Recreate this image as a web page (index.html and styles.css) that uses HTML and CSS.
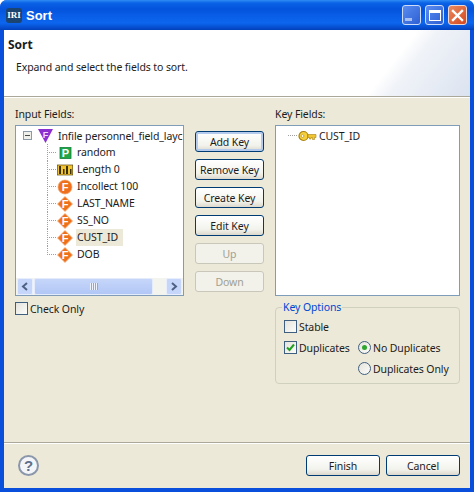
FILE: index.html
```html
<!DOCTYPE html>
<html lang="en">
<head>
    <meta charset="UTF-8">
    <meta name="viewport" content="width=device-width, initial-scale=1.0">
    <title>Sort</title>
    <link rel="stylesheet" href="styles.css">
</head>
<body>
    <svg class="icon-defs">
        <symbol id="icon-diamond" viewBox="0 0 16 16">
            <path d="M8 .5 15.500 8 8 15.500 .5 8z" fill="#ee6f1c" stroke="#f6b07c" stroke-width=".8"/>
            <text x="8" y="12" class="icon-letter">F</text>
        </symbol>
        <symbol id="icon-circle" viewBox="0 0 16 16">
            <circle cx="8" cy="8" r="7" fill="#ee701e" stroke="#f2a468" stroke-width=".7"/>
            <text x="8" y="12" class="icon-letter">F</text>
        </symbol>
    </svg>

    <div class="window">
        <header class="titlebar">
            <div class="app-logo">IRI</div>
            <div class="title-text">Sort</div>
            <div class="win-buttons">
                <div class="win-btn"><span class="min-glyph"></span></div>
                <div class="win-btn"><span class="max-glyph"></span></div>
                <div class="win-btn close">
                    <svg width="13" height="13" viewBox="0 0 13 13"><path d="M2 2l9 9M11 2l-9 9" stroke="#fff" stroke-width="2.4" stroke-linecap="square"/></svg>
                </div>
            </div>
        </header>

        <div class="dialog">
            <section class="banner">
                <h1>Sort</h1>
                <p>Expand and select the fields to sort.</p>
            </section>

            <main class="panels">
                <div class="column">
                    <div class="field-label">Input Fields:</div>
                    <div class="list-box tree-box">
                        <div class="tree">
                            <div class="tree-root">
                                <span class="expander"></span>
                                <svg class="root-icon" width="15" height="15" viewBox="0 0 15 15">
                                    <path d="M0 1h15L7.500 15z" fill="#8b2fd0"/>
                                    <text x="7.500" y="9.500" class="icon-letter small">F</text>
                                </svg>
                                <span class="root-text">Infile personnel_field_layc</span>
                            </div>
                            <div class="tree-row">
                                <span class="branch"></span>
                                <svg class="node-icon" width="16" height="16" viewBox="0 0 16 16">
                                    <rect x="3" y="2.500" width="11" height="11" fill="#1fa64a" stroke="#128038" stroke-width=".8"/>
                                    <text x="8.500" y="12" class="icon-letter">P</text>
                                </svg>
                                <span class="node-text">random</span>
                            </div>
                            <div class="tree-row">
                                <span class="branch"></span>
                                <svg class="node-icon" width="16" height="16" viewBox="0 0 16 16">
                                    <rect x=".3" y="3" width="15.400" height="10" fill="#f3c431" stroke="#5c480c" stroke-width=".7"/>
                                    <path d="M2 4h2v8H2zM6 7h1.500v5H6zM9 4h2v8H9zM13 7h1.500v5H13z" fill="#3c3008"/>
                                </svg>
                                <span class="node-text">Length 0</span>
                            </div>
                            <div class="tree-row">
                                <span class="branch"></span>
                                <svg class="node-icon" width="16" height="16"><use href="#icon-circle"/></svg>
                                <span class="node-text">Incollect 100</span>
                            </div>
                            <div class="tree-row">
                                <span class="branch"></span>
                                <svg class="node-icon" width="16" height="16"><use href="#icon-diamond"/></svg>
                                <span class="node-text">LAST_NAME</span>
                            </div>
                            <div class="tree-row">
                                <span class="branch"></span>
                                <svg class="node-icon" width="16" height="16"><use href="#icon-diamond"/></svg>
                                <span class="node-text">SS_NO</span>
                            </div>
                            <div class="tree-row">
                                <span class="branch"></span>
                                <svg class="node-icon" width="16" height="16"><use href="#icon-diamond"/></svg>
                                <span class="node-text selected">CUST_ID</span>
                            </div>
                            <div class="tree-row">
                                <span class="branch last"></span>
                                <svg class="node-icon" width="16" height="16"><use href="#icon-diamond"/></svg>
                                <span class="node-text">DOB</span>
                            </div>
                        </div>
                        <div class="scrollbar">
                            <div class="scroll-btn">
                                <svg width="8" height="9" viewBox="0 0 8 9"><path d="M6 1 2 4.500 6 8" fill="none" stroke="#4d6185" stroke-width="2"/></svg>
                            </div>
                            <div class="scroll-thumb"><span class="grip"></span></div>
                            <div class="scroll-track"></div>
                            <div class="scroll-btn">
                                <svg width="8" height="9" viewBox="0 0 8 9"><path d="M2 1 6 4.500 2 8" fill="none" stroke="#4d6185" stroke-width="2"/></svg>
                            </div>
                        </div>
                    </div>
                    <div class="check-row under-tree">
                        <span class="check"></span>
                        <span>Check Only</span>
                    </div>
                </div>

                <div class="key-buttons">
                    <button class="btn default" type="button">Add Key</button>
                    <button class="btn" type="button">Remove Key</button>
                    <button class="btn" type="button">Create Key</button>
                    <button class="btn" type="button">Edit Key</button>
                    <button class="btn" type="button" disabled>Up</button>
                    <button class="btn" type="button" disabled>Down</button>
                </div>

                <div class="column">
                    <div class="field-label">Key Fields:</div>
                    <div class="list-box key-box">
                        <div class="key-row">
                            <span class="key-stub"></span>
                            <svg width="19" height="12" viewBox="0 0 19 12">
                                <circle cx="5.500" cy="6" r="4.500" fill="#f5cf3c" stroke="#a8820f" stroke-width="1.200"/>
                                <circle cx="4.500" cy="6" r="1.400" fill="#fff" stroke="#a8820f" stroke-width=".6"/>
                                <path d="M10 4.500h8v3h-1.500v2h-2v-2h-1.500v1.500h-1.500v-1.500h-1.500z" fill="#f0c52f" stroke="#a8820f" stroke-width=".6"/>
                            </svg>
                            <span class="key-text">CUST_ID</span>
                        </div>
                    </div>
                    <fieldset class="key-options">
                        <legend>Key Options</legend>
                        <div class="check-row option-stable">
                            <span class="check"></span>
                            <span>Stable</span>
                        </div>
                        <div class="check-row option-dup">
                            <span class="check">
                                <svg width="11" height="11" viewBox="0 0 11 11"><path d="M2 5.500 4.500 8 9 2.500" fill="none" stroke="#21a121" stroke-width="2"/></svg>
                            </span>
                            <span>Duplicates</span>
                        </div>
                        <div class="check-row option-none">
                            <span class="radio on"></span>
                            <span>No Duplicates</span>
                        </div>
                        <div class="check-row option-only">
                            <span class="radio"></span>
                            <span>Duplicates Only</span>
                        </div>
                    </fieldset>
                </div>
            </main>

            <footer class="actions">
                <div class="help">?</div>
                <button class="btn wide" type="button">Finish</button>
                <button class="btn wide" type="button">Cancel</button>
            </footer>
        </div>
    </div>
</body>
</html>
```

FILE: styles.css
```css
* {
    box-sizing: border-box;
}
html, body {
    margin: 0;
    height: 100%;
    background: #fff;
}
body {
    font-family: "Noto Sans", "DejaVu Sans", sans-serif;
    font-size: 10.5px;
    letter-spacing: -0.1px;
    color: #1c1c1c;
}
.icon-defs {
    display: none;
}
.icon-letter {
    font-family: "Liberation Sans", sans-serif;
    font-size: 11px;
    font-weight: bold;
    fill: #fff;
    text-anchor: middle;
    letter-spacing: 0;
}
.icon-letter.small {
    font-size: 9px;
    fill: #f0d8ff;
}

.window {
    display: flex;
    flex-direction: column;
    height: 492px;
    padding: 0 4px 4px;
    border-radius: 7px 7px 0 0;
    background: #0a4fdc;
}

/* title bar */
.titlebar {
    display: flex;
    align-items: center;
    height: 30px;
    margin: 0 -4px;
    padding: 0 7px 0 6px;
    border-radius: 7px 7px 0 0;
    background: linear-gradient(to bottom, #2f8cf4 0, #0a62e6 3px, #0453dc 9px, #0a5fe8 17px, #0c66ee 23px, #0446c4 29px, #003fb8 30px);
}
.app-logo {
    width: 16px;
    height: 15px;
    border-radius: 3px;
    background: #1c4470;
    color: #fff;
    font-family: "Liberation Serif", serif;
    font-size: 9px;
    font-weight: bold;
    letter-spacing: 0;
    line-height: 15px;
    text-align: center;
}
.title-text {
    margin-left: 4px;
    color: #fff;
    font-family: "Liberation Sans", sans-serif;
    font-size: 13px;
    font-weight: bold;
    letter-spacing: 0;
    flex: 1;
}
.win-buttons {
    display: flex;
    gap: 4px;
}
.win-btn {
    display: flex;
    align-items: center;
    justify-content: center;
    width: 19px;
    height: 20px;
    border: 1px solid #cfdcf8;
    border-radius: 3px;
    background: linear-gradient(135deg, #5a8cf0, #2d5fd4);
}
.win-btn.close {
    border-color: #f0d8d0;
    background: linear-gradient(135deg, #ea8a60, #d4481e);
}
.min-glyph {
    width: 7px;
    height: 3px;
    margin: 9px 6px 0 0;
    background: #a8c0f0;
}
.max-glyph {
    width: 12px;
    height: 11px;
    border: 1px solid #fff;
    border-top-width: 3px;
}

/* dialog body */
.dialog {
    flex: 1;
    display: flex;
    flex-direction: column;
    background: #ece9d8;
}
.banner {
    height: 67px;
    padding: 7px 4px 0;
    border-bottom: 1px solid #aca899;
    box-shadow: 0 1px 0 #fff;
    background: linear-gradient(128deg, #fff 80%, #f0f3f8 84%, #dbe3f0 100%);
}
.banner h1 {
    margin: 0;
    font-size: 12px;
    font-weight: bold;
    letter-spacing: 0;
    line-height: 16px;
}
.banner p {
    margin: 6px 0 0 8px;
    line-height: 16px;
}

.panels {
    flex: 1;
    display: grid;
    grid-template-columns: 169px 69px 185px;
    column-gap: 11px;
    padding: 10px 0 0 11px;
}
.field-label {
    height: 14px;
    margin-bottom: 4px;
    line-height: 14px;
}
.list-box {
    height: 171px;
    border: 1px solid #7f9db9;
    background: #fff;
}

/* tree */
.tree-box {
    display: flex;
    flex-direction: column;
}
.tree {
    flex: 1;
    overflow: hidden;
    padding-top: 1px;
}
.tree-root {
    display: flex;
    align-items: center;
    height: 17px;
    padding-left: 7px;
    white-space: nowrap;
}
.expander {
    width: 9px;
    height: 9px;
    flex: none;
    border: 1px solid #8a9aa8;
    background: linear-gradient(#4a4a4a, #4a4a4a) center / 5px 1px no-repeat, #f0f0ea;
}
.root-icon {
    flex: none;
    margin-left: 6px;
}
.root-text {
    margin-left: 5px;
}
.tree-row {
    display: flex;
    align-items: center;
    height: 17px;
    padding-left: 31px;
}
.branch {
    flex: none;
    align-self: stretch;
    width: 10px;
    background:
        repeating-linear-gradient(to bottom, #a0a0a0 0 1px, transparent 1px 2px) left top / 1px 100% no-repeat,
        repeating-linear-gradient(to right, #a0a0a0 0 1px, transparent 1px 2px) left center / 100% 1px no-repeat;
}
.branch.last {
    background-size: 1px 50%, 100% 1px;
}
.node-icon {
    flex: none;
}
.node-text {
    margin-left: 3px;
    padding: 1px;
    line-height: 15px;
}
.node-text.selected {
    background: #ece9d8;
    padding-right: 5px;
}

/* scrollbar */
.scrollbar {
    display: flex;
    height: 17px;
    flex: none;
    padding: 0 1px;
    background: #f4f4ef;
}
.scroll-btn {
    display: flex;
    align-items: center;
    justify-content: center;
    width: 16px;
    border: 1px solid #e8eefc;
    border-radius: 2px;
    background: #c6d6fa;
}
.scroll-thumb {
    display: flex;
    align-items: center;
    justify-content: center;
    width: 119px;
    margin-left: 1px;
    border: 1px solid #e4ebfb;
    border-radius: 2px;
    background: linear-gradient(to bottom, #c6d6fa, #b2c7f6);
}
.grip {
    width: 8px;
    height: 7px;
    background: repeating-linear-gradient(to right, #eef3fe 0 1px, #8fa8dc 1px 2px);
}
.scroll-track {
    flex: 1;
}

/* checks and radios */
.check-row {
    display: flex;
    align-items: center;
    gap: 2px;
    height: 21px;
    white-space: nowrap;
}
.under-tree {
    margin-top: 2px;
}
.check {
    display: flex;
    align-items: center;
    justify-content: center;
    width: 13px;
    height: 13px;
    flex: none;
    border: 1px solid #3f5f80;
    background: linear-gradient(135deg, #e4e3dc, #fcfcfa);
}
.radio {
    display: flex;
    align-items: center;
    justify-content: center;
    width: 13px;
    height: 13px;
    flex: none;
    border: 1px solid #3f5f80;
    border-radius: 50%;
    background: linear-gradient(135deg, #e4e3dc, #fcfcfa);
}
.radio.on::after {
    content: "";
    width: 5px;
    height: 5px;
    border-radius: 50%;
    background: #2fa52f;
}

/* buttons */
.key-buttons {
    display: flex;
    flex-direction: column;
    gap: 7px;
    padding-top: 24px;
}
.btn {
    height: 21px;
    padding: 0;
    border: 1px solid #003c74;
    border-radius: 3px;
    background: linear-gradient(to bottom, #fff, #f3f3ed 70%, #dcd8cc);
    color: #1c1c1c;
    font-family: inherit;
    font-size: 10.5px;
    letter-spacing: inherit;
    white-space: nowrap;
}
.btn.default {
    box-shadow: inset 0 0 0 2px #b4cbee;
}
.btn:disabled {
    border-color: #c9c7ba;
    background: #f2f1ea;
    color: #a1a192;
}
.btn.wide {
    width: 74px;
}

/* key fields */
.key-box {
    padding: 0 0 0 12px;
}
.key-row {
    display: flex;
    align-items: center;
    height: 19px;
}
.key-stub {
    width: 10px;
    height: 1px;
    background: repeating-linear-gradient(to right, #a0a0a0 0 1px, transparent 1px 2px);
}
.key-text {
    margin-left: 2px;
}
.key-options {
    display: grid;
    grid-template-columns: 74px 1fr;
    grid-template-rows: 21px 21px 21px;
    height: 83px;
    margin: 5px 0 0;
    padding: 2px 0 0 8px;
    border: 1px solid #d0d0bf;
    border-radius: 4px;
    min-width: 0;
}
.key-options legend {
    margin-left: -2px;
    padding: 0 1px;
    color: #0046d5;
    line-height: 13px;
}
.option-stable {
    grid-column: 1;
    grid-row: 1;
}
.option-dup {
    grid-column: 1;
    grid-row: 2;
}
.option-none {
    grid-column: 2;
    grid-row: 2;
}
.option-only {
    grid-column: 2;
    grid-row: 3;
}

/* footer */
.actions {
    display: flex;
    align-items: flex-start;
    gap: 6px;
    height: 46px;
    padding: 12px 10px 0 14px;
    border-top: 1px solid #aca899;
    box-shadow: inset 0 1px 0 #fff;
}
.help {
    width: 21px;
    height: 21px;
    margin-right: auto;
    border: 2px solid #8a97ab;
    border-radius: 50%;
    background: #f4f5f8;
    color: #5f6f8a;
    font-family: "Liberation Sans", sans-serif;
    font-size: 15px;
    font-weight: bold;
    letter-spacing: 0;
    line-height: 17px;
    text-align: center;
}
```
